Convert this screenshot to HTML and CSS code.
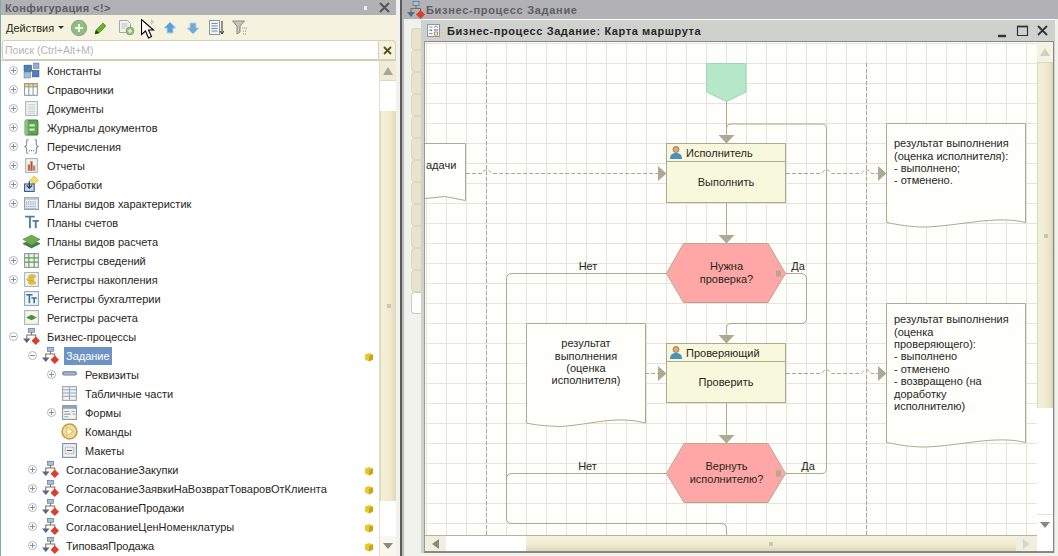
FILE: index.html
```html
<!DOCTYPE html>
<html lang="en">
<head>
    <meta charset="UTF-8">
    <title>Конфигурация</title>
    <link rel="stylesheet" href="styles.css">
</head>
<body>
    <!-- icon sprite -->
    <svg class="sprite" width="0" height="0">
        <symbol id="i-const" viewBox="0 0 16 16">
            <rect x="1" y="3" width="7" height="6" fill="#4f7fb5" stroke="#2f5a8a" stroke-width=".6"/>
            <rect x="10" y="1" width="5" height="5" fill="#8fb2d6" stroke="#4f7fb5" stroke-width=".6"/>
            <rect x="1" y="10" width="6" height="5" fill="#a5bfd8" stroke="#5f87ad" stroke-width=".6"/>
            <rect x="9" y="8" width="6" height="6" fill="#4f7fb5" stroke="#2f5a8a" stroke-width=".6"/>
        </symbol>
        <symbol id="i-cat" viewBox="0 0 16 16">
            <rect x="1.500" y="2.500" width="12" height="11" fill="#fff" stroke="#8a9aa8"/>
            <rect x="1.500" y="2.500" width="12" height="3" fill="#e8d68c" stroke="#a09a70"/>
            <path d="M5.500 2.500v11M9.500 2.500v11" stroke="#8a9aa8" fill="none"/>
        </symbol>
        <symbol id="i-doc" viewBox="0 0 16 16">
            <rect x="2.500" y="1.500" width="11" height="13" fill="#f6f6f6" stroke="#a8b0b8"/>
            <path d="M4.500 4.500h7M4.500 6.500h7M4.500 8.500h7M4.500 10.500h7M4.500 12.500h7" stroke="#c4c8cc"/>
        </symbol>
        <symbol id="i-journal" viewBox="0 0 16 16">
            <rect x="2" y="1" width="12" height="14" rx="1" fill="#5da552" stroke="#3d7d3a"/>
            <rect x="2" y="1" width="2.500" height="14" fill="#8cc47e"/>
            <rect x="6" y="5" width="5" height="2" fill="#d6ecc8"/>
            <rect x="6" y="9" width="5" height="2" fill="#d6ecc8"/>
        </symbol>
        <symbol id="i-enum" viewBox="0 0 16 16">
            <path d="M5 1.500C3 1.500 3.500 3 3.500 5S3.500 7.500 2 8c1.500.5 1.500 1 1.500 3s-.5 3.500 1.500 3.500M11 1.500c2 0 1.500 1.500 1.500 3.500s0 2.500 1.500 3c-1.500.5-1.500 1-1.500 3s.5 3.500-1.500 3.500" fill="none" stroke="#7a8a98"/>
            <path d="M5.500 12h1M7.500 12h1M9.500 12h1" stroke="#56636e"/>
        </symbol>
        <symbol id="i-report" viewBox="0 0 16 16">
            <rect x="2.500" y="1.500" width="11" height="13" fill="#f4f4ee" stroke="#a8b0b8"/>
            <rect x="4.500" y="7" width="2" height="6" fill="#b0703c"/>
            <rect x="7" y="4" width="2" height="9" fill="#c04a3c"/>
            <rect x="9.500" y="8" width="2" height="5" fill="#a08a50"/>
        </symbol>
        <symbol id="i-proc" viewBox="0 0 16 16">
            <path d="M10.500 0l4 4-4 4-4-4z" fill="#f4dc6c" stroke="#c8ac40" stroke-width=".6"/>
            <rect x="1.500" y="7.500" width="9" height="7" fill="#c8d8e8" stroke="#38587c"/>
            <path d="M6 5v6M3.500 9L6 11.500 8.500 9" fill="none" stroke="#20405f" stroke-width="1.200"/>
        </symbol>
        <symbol id="i-plan" viewBox="0 0 16 16">
            <rect x="1.500" y="2.500" width="13" height="11" fill="#eef2f6" stroke="#8a98a8"/>
            <rect x="1.500" y="2.500" width="13" height="2" fill="#b8c6d6"/>
            <path d="M3 6.500h10M3 8.500h10M3 10.500h10M3 12.500h10" stroke="#6f86a0" stroke-dasharray="1 1"/>
        </symbol>
        <symbol id="i-acc" viewBox="0 0 16 16">
            <path d="M2 2.500h9M6.500 2.500v11M9 6.500h6M12 6.500v7" fill="none" stroke="#4f7fa8" stroke-width="1.800"/>
        </symbol>
        <symbol id="i-calc" viewBox="0 0 16 16">
            <path d="M0 6l8-4 8 4-8 4z" fill="#6fae4c" stroke="#3f7a30" stroke-width=".6"/>
            <path d="M0 10l3-1.500 5 2.500 5-2.500 3 1.500-8 4z" fill="#3f8a3c" stroke="#2f6a2c" stroke-width=".6"/>
        </symbol>
        <symbol id="i-reginfo" viewBox="0 0 16 16">
            <rect x="1.500" y="1.500" width="13" height="13" fill="#f0f0e6" stroke="#8a9aa0"/>
            <path d="M1.500 5.500h13M1.500 9.500h13M5.500 1.500v13M10.500 1.500v13" stroke="#5f9a5c"/>
        </symbol>
        <symbol id="i-regacc" viewBox="0 0 16 16">
            <rect x="1.500" y="1.500" width="13" height="13" fill="#f4f4ec" stroke="#a8b4bc"/>
            <ellipse cx="8.500" cy="5" rx="3.500" ry="1.500" fill="#e8c440" stroke="#b8922a" stroke-width=".5"/>
            <ellipse cx="7" cy="8" rx="3.500" ry="1.500" fill="#e8c440" stroke="#b8922a" stroke-width=".5"/>
            <ellipse cx="8.500" cy="11" rx="3.500" ry="1.500" fill="#e8c440" stroke="#b8922a" stroke-width=".5"/>
        </symbol>
        <symbol id="i-regbuh" viewBox="0 0 16 16">
            <rect x="1.500" y="1.500" width="13" height="13" fill="#f0f6fa" stroke="#8aa4bc"/>
            <path d="M3 4.500h6M6 4.500v8M8 7.500h5M10.500 7.500v5" fill="none" stroke="#3f6f98" stroke-width="1.500"/>
        </symbol>
        <symbol id="i-regcalc" viewBox="0 0 16 16">
            <rect x="1.500" y="1.500" width="13" height="13" fill="#f4f4ec" stroke="#a8b4bc"/>
            <path d="M3 8l5-2.500L13 8l-5 2.500z" fill="#4a8f3c"/>
        </symbol>
        <symbol id="i-bp" viewBox="0 0 18 18">
            <rect x="6" y="0.500" width="6" height="4" fill="#a8c0dc" stroke="#4f6f98" stroke-width=".7"/>
            <path d="M9 4.500v3M4 12V7.500h9.500V11" fill="none" stroke="#8a6a50" stroke-width="1.100"/>
            <path d="M0 11h8l-4 5z" fill="#4f6a8c"/>
            <path d="M13.500 9l4.500 4.500-4.500 4.500L9 13.500z" fill="#d8402c"/>
        </symbol>
        <symbol id="i-attr" viewBox="0 0 16 16">
            <rect x="1.500" y="5.500" width="13" height="3" rx="1.500" fill="#a8bcd0" stroke="#6a8099"/>
        </symbol>
        <symbol id="i-tab" viewBox="0 0 16 16">
            <rect x="1.500" y="1.500" width="13" height="13" fill="#eef2f6" stroke="#9aa6b2"/>
            <path d="M1.500 4.500h13M1.500 7.500h13M1.500 10.500h13M8 1.500v13" stroke="#9aa6b2"/>
        </symbol>
        <symbol id="i-form" viewBox="0 0 16 16">
            <rect x="1.500" y="1.500" width="13" height="13" fill="#f4f4f0" stroke="#8696a4"/>
            <rect x="1.500" y="1.500" width="13" height="3" fill="#8ea4bc"/>
            <path d="M3 7h5M3 9.500h6M3 12h4M10 7h3M11 9.500h2" stroke="#99a4ae"/>
        </symbol>
        <symbol id="i-cmd" viewBox="0 0 16 16">
            <circle cx="8" cy="8" r="7" fill="#f2dc9c" stroke="#c89a3c" stroke-width="1.400"/>
            <path d="M5.500 4l6 4-6 4z" fill="#fff8e0" stroke="#d0a858" stroke-width=".7"/>
        </symbol>
        <symbol id="i-tmpl" viewBox="0 0 16 16">
            <rect x="1.500" y="1.500" width="13" height="13" fill="#eef0f4" stroke="#7f8fa0"/>
            <rect x="4" y="5" width="8" height="6" fill="none" stroke="#7f8fa0" stroke-dasharray="1 1"/>
            <path d="M5.500 8h5" stroke="#a04a3c"/>
        </symbol>
        <symbol id="i-cube" viewBox="0 0 10 10">
            <path d="M1 2.500L5 1l4 1.500v5L5 9.500 1 7.500z" fill="#e8c92c"/>
            <path d="M5 4v5.500L9 7.500v-5z" fill="#c8a418"/>
        </symbol>
    </svg>

    <div class="desk">
        <!-- left panel: configuration tree -->
        <section class="config">
            <div class="cfg-title">
                <span class="cfg-name">Конфигурация &lt;!&gt;</span>
                <span class="cfg-pin"></span>
                <svg class="cfg-close" width="11" height="11" viewBox="0 0 11 11"><path d="M1 1l9 9M10 1l-9 9" stroke="#555" stroke-width="2"/></svg>
            </div>
            <div class="toolbar">
                <span class="actions">Действия</span>
                <span class="caret"></span>
                <svg class="tb tb-add" width="18" height="18" viewBox="0 0 18 18"><circle cx="9" cy="9" r="7.500" fill="#8cc07c" stroke="#9aa890" stroke-width="1.400"/><path d="M9 5v8M5 9h8" stroke="#f4fbe8" stroke-width="2"/></svg>
                <svg class="tb tb-pen" width="14" height="14" viewBox="0 0 14 14"><path d="M1 13l1-4 7-7 3 3-7 7z" fill="#6cb02c" stroke="#4a8420" stroke-width=".6"/><path d="M1 13l1-4 3 3z" fill="#1f3a10"/></svg>
                <svg class="tb tb-copy" width="17" height="17" viewBox="0 0 17 17"><path d="M1.500 1.500h8l3 3v9h-11z" fill="#f0f0ec" stroke="#a4aab0"/><path d="M3.500 5h6M3.500 7h6M3.500 9h4" stroke="#c0c4c8"/><circle cx="12" cy="12" r="4" fill="#8cc07c" stroke="#7a9a70" stroke-width=".6"/><path d="M12 10v4M10 12h4" stroke="#f4fbe8" stroke-width="1.200"/></svg>
                <svg class="tb tb-cursor" width="14" height="21" viewBox="0 0 14 21"><path d="M10 0l3 3-3 3z" fill="#c4c4bc"/><path d="M.5 .5v15l4-3.500 3 7 3-1.500-3-6.500h5z" fill="#fff" stroke="#000" stroke-width="1.100"/></svg>
                <svg class="tb tb-up" width="14" height="14" viewBox="0 0 14 14"><path d="M7 1l6 6H10v5H4V7H1z" fill="#5aa0d8" stroke="#b4cfe0" stroke-width="1"/></svg>
                <svg class="tb tb-down" width="14" height="14" viewBox="0 0 14 14"><path d="M4 2h6v5h3l-6 6-6-6h3z" fill="#6ea8dc" stroke="#b4cfe0" stroke-width="1"/></svg>
                <svg class="tb tb-list" width="15" height="16" viewBox="0 0 15 16"><rect x=".5" y=".5" width="10" height="14" fill="#eef2f4" stroke="#8a9aa8"/><path d="M2.500 3.500h6M2.500 6h6M2.500 8.500h6M2.500 11h6" stroke="#7f8f9f"/><path d="M13 1v12M11 11l2 3 2-3" fill="none" stroke="#333"/></svg>
                <svg class="tb tb-filter" width="16" height="16" viewBox="0 0 16 16"><path d="M.5 1h12l-4.500 5v6l-3 2V6z" fill="#c8c4bc" stroke="#8a8a80"/><path d="M10 8h5M11 11h4M11 14h4" stroke="#8a8a70" stroke-dasharray="1 1"/></svg>
            </div>
            <div class="search">
                <div class="search-box">Поиск (Ctrl+Alt+M)</div>
                <div class="search-clear">
                    <svg width="9" height="9" viewBox="0 0 9 9"><path d="M1 1l7 7M8 1l-7 7" stroke="#5a5018" stroke-width="1.800"/></svg>
                </div>
            </div>
            <div class="tree-wrap">
                <ul class="tree">
                    <li class="row"><span class="exp"></span><svg class="ico"><use href="#i-const"/></svg><span class="txt">Константы</span></li>
                    <li class="row"><span class="exp"></span><svg class="ico"><use href="#i-cat"/></svg><span class="txt">Справочники</span></li>
                    <li class="row"><span class="exp"></span><svg class="ico"><use href="#i-doc"/></svg><span class="txt">Документы</span></li>
                    <li class="row"><span class="exp"></span><svg class="ico"><use href="#i-journal"/></svg><span class="txt">Журналы документов</span></li>
                    <li class="row"><span class="exp"></span><svg class="ico"><use href="#i-enum"/></svg><span class="txt">Перечисления</span></li>
                    <li class="row"><span class="exp"></span><svg class="ico"><use href="#i-report"/></svg><span class="txt">Отчеты</span></li>
                    <li class="row"><span class="exp"></span><svg class="ico"><use href="#i-proc"/></svg><span class="txt">Обработки</span></li>
                    <li class="row"><span class="exp"></span><svg class="ico"><use href="#i-plan"/></svg><span class="txt">Планы видов характеристик</span></li>
                    <li class="row"><span class="exp none"></span><svg class="ico"><use href="#i-acc"/></svg><span class="txt">Планы счетов</span></li>
                    <li class="row"><span class="exp none"></span><svg class="ico"><use href="#i-calc"/></svg><span class="txt">Планы видов расчета</span></li>
                    <li class="row"><span class="exp"></span><svg class="ico"><use href="#i-reginfo"/></svg><span class="txt">Регистры сведений</span></li>
                    <li class="row"><span class="exp"></span><svg class="ico"><use href="#i-regacc"/></svg><span class="txt">Регистры накопления</span></li>
                    <li class="row"><span class="exp none"></span><svg class="ico"><use href="#i-regbuh"/></svg><span class="txt">Регистры бухгалтерии</span></li>
                    <li class="row"><span class="exp none"></span><svg class="ico"><use href="#i-regcalc"/></svg><span class="txt">Регистры расчета</span></li>
                    <li class="row"><span class="exp open"></span><svg class="ico"><use href="#i-bp"/></svg><span class="txt">Бизнес-процессы</span></li>
                    <li class="row lvl2"><span class="exp open"></span><svg class="ico"><use href="#i-bp"/></svg><span class="txt sel">Задание</span><svg class="cube"><use href="#i-cube"/></svg></li>
                    <li class="row lvl3"><span class="exp"></span><svg class="ico"><use href="#i-attr"/></svg><span class="txt">Реквизиты</span></li>
                    <li class="row lvl3"><span class="exp none"></span><svg class="ico"><use href="#i-tab"/></svg><span class="txt">Табличные части</span></li>
                    <li class="row lvl3"><span class="exp"></span><svg class="ico"><use href="#i-form"/></svg><span class="txt">Формы</span></li>
                    <li class="row lvl3"><span class="exp none"></span><svg class="ico"><use href="#i-cmd"/></svg><span class="txt">Команды</span></li>
                    <li class="row lvl3"><span class="exp none"></span><svg class="ico"><use href="#i-tmpl"/></svg><span class="txt">Макеты</span></li>
                    <li class="row lvl2"><span class="exp"></span><svg class="ico"><use href="#i-bp"/></svg><span class="txt">СогласованиеЗакупки</span><svg class="cube"><use href="#i-cube"/></svg></li>
                    <li class="row lvl2"><span class="exp"></span><svg class="ico"><use href="#i-bp"/></svg><span class="txt">СогласованиеЗаявкиНаВозвратТоваровОтКлиента</span><svg class="cube"><use href="#i-cube"/></svg></li>
                    <li class="row lvl2"><span class="exp"></span><svg class="ico"><use href="#i-bp"/></svg><span class="txt">СогласованиеПродажи</span><svg class="cube"><use href="#i-cube"/></svg></li>
                    <li class="row lvl2"><span class="exp"></span><svg class="ico"><use href="#i-bp"/></svg><span class="txt">СогласованиеЦенНоменклатуры</span><svg class="cube"><use href="#i-cube"/></svg></li>
                    <li class="row lvl2"><span class="exp"></span><svg class="ico"><use href="#i-bp"/></svg><span class="txt">ТиповаяПродажа</span><svg class="cube"><use href="#i-cube"/></svg></li>
                </ul>
                <div class="vbar cfg-bar">
                    <div class="sb-btn"><span class="tri-up"></span></div>
                    <div class="sb-track"></div>
                    <div class="sb-thumb"><span class="grip"></span></div>
                    <div class="sb-track2"></div>
                    <div class="sb-btn end"><span class="tri-down"></span></div>
                </div>
            </div>
        </section>

        <!-- right side: process window -->
        <section class="process">
            <div class="proc-title">
                <svg class="proc-ico"><use href="#i-bp"/></svg>
                <span>Бизнес-процесс Задание</span>
            </div>
            <div class="proc-body">
                <div class="tabs">
                    <span class="tab"></span><span class="tab"></span><span class="tab"></span><span class="tab"></span>
                    <span class="tab"></span><span class="tab"></span><span class="tab"></span><span class="tab"></span>
                    <span class="tab"></span><span class="tab"></span><span class="tab"></span><span class="tab"></span>
                    <span class="tab active"></span>
                </div>
                <div class="child">
                    <div class="child-title">
                        <svg class="child-ico" width="13" height="13" viewBox="0 0 13 13"><rect x=".5" y=".5" width="12" height="12" fill="#f4f8fc" stroke="#7f9ab8"/><path d="M2.500 3h3M7 3.500l2-1.500 2 1.500M2 9.500h3.500M7.500 8h3v3h-3z" fill="none" stroke="#c08a30"/><path d="M2.500 6h2v1M7 6h4" fill="none" stroke="#3f6a98"/></svg>
                        <span class="child-name">Бизнес-процесс Задание: Карта маршрута</span>
                        <svg class="win-btns" width="52" height="14" viewBox="0 0 52 14"><path d="M0 12h8" stroke="#333" stroke-width="2.500"/><path d="M19.500 2.500h10v9h-10z" fill="none" stroke="#333" stroke-width="1.200"/><path d="M19 2.500h11" stroke="#333" stroke-width="1.800"/><path d="M40 2l9 9M49 2l-9 9" stroke="#333" stroke-width="1.800"/></svg>
                    </div>
                    <div class="child-inner">
                        <div class="canvas">
                            <!-- viewBox uses window coordinates of the map -->
                            <svg class="map" width="612" height="493" viewBox="425 42 612 493">
                                <path class="swim" d="M486.500 63V535M866.500 63V535"/>

                                <!-- flow lines -->
                                <path class="flow" d="M726.500 101V135"/>
                                <path class="flow" d="M785 473.500H822Q826.500 473.500 826.500 468V129Q826.500 124 822 124H731Q726.500 124 726.500 129"/>
                                <path class="flow" d="M726.500 202V235"/>
                                <path class="flow" d="M785 273.500H801Q806.500 273.500 806.500 279V318Q806.500 323.500 801 323.500H731Q726.500 323.500 726.500 328V335"/>
                                <path class="flow" d="M666 273.500H512Q506.500 273.500 506.500 279V518Q506.500 523.500 512 523.500H721Q726.500 523.500 726.500 529V535"/>
                                <path class="flow" d="M666 473.500H512Q506.500 473.500 506.500 479"/>
                                <path class="flow" d="M726.500 402V435"/>
                                <path class="arrow" d="M718.500 135h16l-8 8.500zM718.500 235h16l-8 8.500zM718.500 335h16l-8 8.500zM718.500 435h16l-8 8.500z"/>

                                <!-- data links -->
                                <path class="link" d="M466 173.500H481.500Q486.500 166 491.500 173.500H658"/>
                                <path class="link" d="M786 173.500H821.500Q826.500 166 831.500 173.500H861.500Q866.500 166 871.500 173.500H878"/>
                                <path class="link" d="M645 373.500H658"/>
                                <path class="link" d="M786 373.500H821.500Q826.500 366 831.500 373.500H861.500Q866.500 366 871.500 373.500H878"/>
                                <path class="arrow" d="M658 166v15l8.500-7.500zM878 166v15l8.500-7.500zM658 366v15l8.500-7.500zM878 366v15l8.500-7.500z"/>

                                <!-- start point -->
                                <path class="start" d="M706.500 63.500H746V92L726.500 101.500 706.500 92Z"/>

                                <!-- documents -->
                                <path class="docu" d="M420 143.500H465.500V200.500L445 196.500 420 199"/>
                                <text class="lbl" x="426" y="169">адачи</text>
                                <path class="docu" d="M526.500 323.500H645.500V423C615 415 590 425 560 426.500 545 426 535 425 526.500 423Z"/>
                                <text class="lbl mid" x="586" y="347">результат</text>
                                <text class="lbl mid" x="586" y="360">выполнения</text>
                                <text class="lbl mid" x="586" y="372">(оценка</text>
                                <text class="lbl mid" x="586" y="384">исполнителя)</text>
                                <path class="docu" d="M886.500 123.500H1025.500V222.500C995 215 960 226 925 227 910 227 900 225 886.500 222.500Z"/>
                                <text class="lbl" x="894" y="147">результат выполнения</text>
                                <text class="lbl" x="894" y="160">(оценка исполнителя):</text>
                                <text class="lbl" x="894" y="172">- выполнено;</text>
                                <text class="lbl" x="894" y="184">- отменено.</text>
                                <path class="docu" d="M886.500 303.500H1025.500V442.500C995 435 960 446 925 447 910 447 900 445 886.500 442.500Z"/>
                                <text class="lbl" x="894" y="323">результат выполнения</text>
                                <text class="lbl" x="894" y="336">(оценка</text>
                                <text class="lbl" x="894" y="348">проверяющего):</text>
                                <text class="lbl" x="894" y="360">- выполнено</text>
                                <text class="lbl" x="894" y="373">- отменено</text>
                                <text class="lbl" x="894" y="385">- возвращено (на</text>
                                <text class="lbl" x="894" y="398">доработку</text>
                                <text class="lbl" x="894" y="410">исполнителю)</text>

                                <!-- tasks -->
                                <rect class="task" x="666.500" y="143.500" width="119" height="59"/>
                                <path class="task-line" d="M666.500 161.500H785.500"/>
                                <use href="#i-user" x="670" y="146" width="12" height="13"/>
                                <text class="lbl" x="686" y="157">Исполнитель</text>
                                <text class="lbl mid" x="726" y="186">Выполнить</text>
                                <rect class="task" x="666.500" y="343.500" width="119" height="59"/>
                                <path class="task-line" d="M666.500 361.500H785.500"/>
                                <use href="#i-user" x="670" y="346" width="12" height="13"/>
                                <text class="lbl" x="686" y="357">Проверяющий</text>
                                <text class="lbl mid" x="726" y="386">Проверить</text>

                                <!-- conditions -->
                                <path class="cond" d="M666.500 273.500L683.500 243.500H768L785.500 273.500 768 302.500H683.500Z"/>
                                <rect class="handle" x="776" y="270.500" width="5" height="6"/>
                                <text class="lbl mid" x="726.500" y="270">Нужна</text>
                                <text class="lbl mid" x="726.500" y="283">проверка?</text>
                                <text class="lbl mid" x="588" y="270">Нет</text>
                                <text class="lbl mid" x="798" y="270">Да</text>
                                <path class="cond" d="M666.500 473.500L684 443.500H768L785.500 473.500 768 502.500H684Z"/>
                                <rect class="handle" x="776" y="470.500" width="5" height="6"/>
                                <text class="lbl mid" x="726.500" y="470">Вернуть</text>
                                <text class="lbl mid" x="726.500" y="483">исполнителю?</text>
                                <text class="lbl mid" x="587.500" y="470">Нет</text>
                                <text class="lbl mid" x="808" y="470">Да</text>

                                <symbol id="i-user" viewBox="0 0 12 13">
                                    <circle cx="6" cy="3.500" r="3" fill="#e0a878" stroke="#8a5a30" stroke-width=".7"/>
                                    <path d="M0 13c0-4 2-6 6-6s6 2 6 6z" fill="#4a90c0"/>
                                </symbol>
                            </svg>
                        </div>
                        <div class="vbar child-bar">
                            <div class="sb-btn top"><span class="tri-up light"></span></div>
                            <div class="sb-thumb"><span class="grip"></span></div>
                            <div class="sb-track2"></div>
                            <div class="sb-btn end"><span class="tri-down"></span></div>
                        </div>
                        <div class="hbar">
                            <div class="hb-btn"><span class="tri-left"></span></div>
                            <div class="hb-track"></div>
                            <div class="hb-thumb"><span class="grip"></span></div>
                            <div class="hb-btn"><span class="tri-right"></span></div>
                        </div>
                        <div class="corner"></div>
                    </div>
                </div>
            </div>
        </section>
    </div>
</body>
</html>
```

FILE: styles.css
```css
html, body {
    margin: 0;
    height: 100%;
}
body {
    overflow: hidden;
    background-color: #f2f2ec;
    font-family: "Liberation Sans", Arial, sans-serif;
    font-size: 11px;
    color: #1c1c10;
}
.sprite {
    position: absolute;
}
.desk {
    display: flex;
    width: 1058px;
    height: 556px;
}

/* left panel */
.config {
    width: 396px;
    flex: none;
    display: flex;
    flex-direction: column;
    border-left: 1px solid #7fa8bc;
    box-sizing: border-box;
    background-color: #f5f3df;
}
.cfg-title {
    height: 15px;
    flex: none;
    display: flex;
    align-items: center;
    background-color: #b2b2b6;
    padding-left: 4px;
    padding-right: 6px;
}
.cfg-name {
    flex: 1;
    font-size: 11px;
    font-weight: bold;
    letter-spacing: .4px;
    color: #5e5e62;
}
.cfg-pin {
    width: 3px;
    height: 4px;
    margin-right: 12px;
    background-color: #eee;
}
.toolbar {
    height: 25px;
    flex: none;
    display: flex;
    align-items: center;
    padding-left: 5px;
    box-sizing: border-box;
}
.actions {
    font-size: 11px;
    color: #2a2a18;
}
.caret {
    margin-left: 4px;
    border-left: 3px solid transparent;
    border-right: 3px solid transparent;
    border-top: 3px solid #333;
}
.tb {
    flex: none;
}
.tb-add { margin-left: 6px; }
.tb-pen { margin-left: 6px; }
.tb-copy { margin-left: 10px; }
.tb-cursor { margin-left: 6px; margin-top: 3px; }
.tb-up { margin-left: 8px; }
.tb-down { margin-left: 9px; }
.tb-list { margin-left: 9px; }
.tb-filter { margin-left: 8px; }

.search {
    height: 21px;
    flex: none;
    display: flex;
    padding-left: 1px;
    box-sizing: border-box;
    border-bottom: 1px solid #d0ccb0;
}
.search-box {
    flex: 1;
    background-color: #fff;
    border: 1px solid #d4d0b4;
    border-radius: 3px 0 0 3px;
    color: #b4b4b4;
    font-size: 10.500px;
    padding: 2px 2px;
    line-height: 15px;
}
.search-clear {
    width: 16px;
    display: flex;
    align-items: center;
    justify-content: center;
    background-color: #f5f3df;
    border: 1px solid #d4d0b4;
    border-left: none;
    border-radius: 0 4px 0 0;
}

/* tree */
.tree-wrap {
    flex: 1;
    display: flex;
    background-color: #fff;
    min-height: 0;
}
.tree {
    flex: 1;
    list-style: none;
    margin: 0;
    padding: 0;
    overflow: hidden;
}
.row {
    height: 19px;
    display: flex;
    align-items: center;
    padding-left: 8px;
    font-size: 11px;
    white-space: nowrap;
}
.lvl2 { padding-left: 27px; }
.lvl3 { padding-left: 46px; }
.exp {
    width: 9px;
    height: 9px;
    flex: none;
    box-sizing: border-box;
    border: 1px solid #b4b8bc;
    border-radius: 50%;
    margin-right: 5px;
    background:
        linear-gradient(#8a8e92, #8a8e92) center / 5px 1px no-repeat,
        linear-gradient(#8a8e92, #8a8e92) center / 1px 5px no-repeat;
}
.exp.open {
    background: linear-gradient(#8a8e92, #8a8e92) center / 5px 1px no-repeat;
}
.exp.none {
    border: none;
    background: none;
}
.ico {
    width: 17px;
    height: 17px;
    flex: none;
    margin-right: 4px;
}
.txt {
    padding: 0 2px;
    line-height: 18px;
    margin-left: 1px;
    color: #26261a;
}
.txt.sel {
    background-color: #6f94c3;
    color: #fff;
    width: 44px;
}
.cube {
    width: 10px;
    height: 10px;
    flex: none;
    margin-left: auto;
    margin-right: 5px;
    margin-top: 3px;
}

/* scroll bars */
.vbar {
    width: 16px;
    flex: none;
    display: flex;
    flex-direction: column;
    background-color: #fff;
}
.sb-btn {
    height: 20px;
    flex: none;
    display: flex;
    align-items: center;
    justify-content: center;
    background-color: #efecd6;
    border-bottom: 1px solid #dcd8bc;
    box-sizing: border-box;
}
.sb-btn.end {
    border-bottom: none;
    background-color: #f8f8f0;
}
.sb-track {
    height: 30px;
    flex: none;
}
.sb-thumb {
    flex: 1;
    display: flex;
    align-items: center;
    justify-content: center;
    background: linear-gradient(to right, #f4efd8, #f0ebcf 60%, #dcd7b6);
    border-left: 1px solid #dcd8bc;
}
.sb-track2 {
    height: 35px;
    flex: none;
}
.cfg-bar {
    border-left: 1px solid #e2dfc8;
}
.grip {
    width: 4px;
    height: 4px;
    background-color: #c8c8b8;
}
.tri-up, .tri-down {
    border-left: 5px solid transparent;
    border-right: 5px solid transparent;
}
.tri-up { border-bottom: 8px solid #a8a898; }
.tri-up.light { border-bottom-color: #d0d0bc; }
.tri-down { border-top: 6px solid #8a8a7c; }
.tri-left, .tri-right {
    border-top: 5px solid transparent;
    border-bottom: 5px solid transparent;
}
.tri-left { border-right: 7px solid #8a8a7c; }
.tri-right { border-left: 7px solid #d8d8c8; }

/* right side */
.process {
    flex: 1;
    margin-left: 4px;
    display: flex;
    flex-direction: column;
    border-left: 2px solid #5c5c5c;
    min-width: 0;
}
.proc-title {
    height: 19px;
    flex: none;
    display: flex;
    align-items: center;
    background-color: #b2b2b6;
    color: #5e5e62;
    font-size: 11px;
    font-weight: bold;
    letter-spacing: .7px;
}
.proc-ico {
    width: 18px;
    height: 18px;
    flex: none;
    margin-left: 5px;
    margin-right: 1px;
}
.proc-body {
    flex: 1;
    display: flex;
    min-height: 0;
    border-left: 2px solid #bcbcbc;
    padding-right: 3px;
}
.tabs {
    width: 10px;
    flex: none;
    display: flex;
    flex-direction: column;
    margin-left: 7px;
    padding-top: 9px;
}
.tab {
    height: 22px;
    flex: none;
    box-sizing: border-box;
    background-color: #e8e4cc;
    border: 1px solid #dcd8bc;
    border-right: none;
    border-radius: 4px 0 0 4px;
}
.tab.active {
    background-color: #fff;
    border-color: #cfcbb0;
}
.child {
    flex: 1;
    display: flex;
    flex-direction: column;
    height: 534px;
    box-sizing: border-box;
    border-top: 1px solid #fff;
    border-left: 1px solid #d0d4cc;
    background-color: #cfd2cc;
    min-width: 0;
}
.child-title {
    height: 21px;
    flex: none;
    display: flex;
    align-items: center;
    padding-left: 5px;
}
.child-ico {
    flex: none;
    margin-right: 7px;
}
.child-name {
    flex: 1;
    font-size: 11px;
    font-weight: bold;
    letter-spacing: .6px;
    color: #262626;
}
.win-btns {
    flex: none;
    margin-right: 5px;
}
.child-inner {
    flex: 1;
    display: grid;
    grid-template-columns: 612px 16px;
    grid-template-rows: 493px 16px;
    align-content: start;
    margin-left: 2px;
    border-top: 1px solid #888;
    border-left: 1px solid #9a9a90;
    border-right: 1px solid #888;
    border-bottom: 2px solid #888;
    background-color: #fff;
    width: 628px;
}
.canvas {
    position: relative;
    background-color: #fefefb;
    background-image:
        linear-gradient(to right, #e4e4dc 1px, transparent 1px),
        linear-gradient(to bottom, #e4e4dc 1px, transparent 1px);
    background-size: 20px 20px;
    background-position: 1px 1px;
    overflow: hidden;
}
.map {
    display: block;
}
.child-bar .sb-btn.top {
    height: 21px;
    background-color: #f4f2e0;
}
.child-bar .sb-btn.end {
    height: 21px;
    background-color: #fff;
    border-top: 1px solid #e4e2d0;
}
.child-bar .sb-track2 {
    height: 106px;
}
.hbar {
    display: flex;
    border-top: 1px solid #b4b49c;
    box-sizing: border-box;
    background-color: #fff;
}
.hb-btn {
    width: 21px;
    flex: none;
    display: flex;
    align-items: center;
    justify-content: center;
    background-color: #f0efe0;
}
.hb-track {
    width: 80px;
    flex: none;
}
.hb-thumb {
    flex: 1;
    display: flex;
    align-items: center;
    justify-content: center;
    background: linear-gradient(#f6f2dc, #f0ebcf 60%, #dcd7b6);
}
.corner {
    background-color: #fff;
}

/* route map */
.map text {
    font-family: "Liberation Sans", Arial, sans-serif;
    font-size: 11px;
    fill: #26261a;
}
.map text.mid {
    text-anchor: middle;
}
.swim {
    fill: none;
    stroke: #a8a898;
    stroke-dasharray: 4 2;
}
.flow {
    fill: none;
    stroke: #acaa92;
}
.link {
    fill: none;
    stroke: #a8a890;
    stroke-dasharray: 4 2;
}
.arrow {
    fill: #acaa92;
}
.start {
    fill: #b4e8c8;
    stroke: #a4d4b4;
}
.docu {
    fill: #fefefa;
    stroke: #acaa92;
}
.task {
    fill: #f8f8dc;
    stroke: #acaa92;
}
.task-line {
    stroke: #acaa92;
}
.cond {
    fill: #ffa6a6;
    stroke: #b4aa92;
}
.handle {
    fill: #b4a890;
}
```
